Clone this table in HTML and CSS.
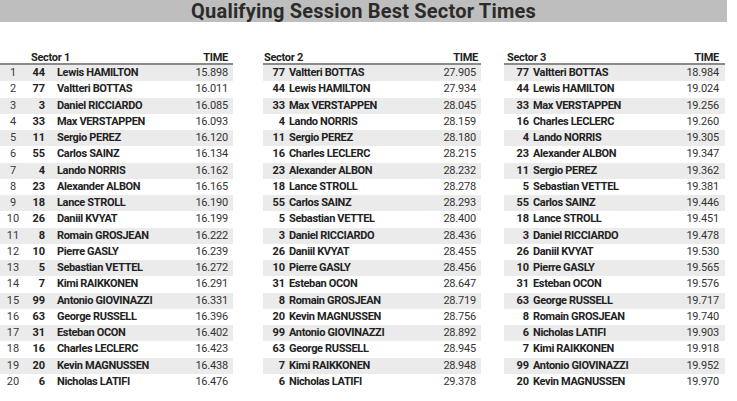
FILE: index.html
```html
<!DOCTYPE html>
<html>
<head>
<meta charset="utf-8">
<link rel="stylesheet" href="styles.css">
</head>
<body>
<div class="title">Qualifying Session Best Sector Times</div>
<div class="tables">
  <div class="tbl t1">
    <div class="head"><span class="hs">Sector 1</span><span class="ht">TIME</span></div>
    <div class="row"><span class="pos">1</span><span class="num">44</span><span class="name">Lewis HAMILTON</span><span class="time">15.898</span></div>
    <div class="row"><span class="pos">2</span><span class="num">77</span><span class="name">Valtteri BOTTAS</span><span class="time">16.011</span></div>
    <div class="row"><span class="pos">3</span><span class="num">3</span><span class="name">Daniel RICCIARDO</span><span class="time">16.085</span></div>
    <div class="row"><span class="pos">4</span><span class="num">33</span><span class="name">Max VERSTAPPEN</span><span class="time">16.093</span></div>
    <div class="row"><span class="pos">5</span><span class="num">11</span><span class="name">Sergio PEREZ</span><span class="time">16.120</span></div>
    <div class="row"><span class="pos">6</span><span class="num">55</span><span class="name">Carlos SAINZ</span><span class="time">16.134</span></div>
    <div class="row"><span class="pos">7</span><span class="num">4</span><span class="name">Lando NORRIS</span><span class="time">16.162</span></div>
    <div class="row"><span class="pos">8</span><span class="num">23</span><span class="name">Alexander ALBON</span><span class="time">16.165</span></div>
    <div class="row"><span class="pos">9</span><span class="num">18</span><span class="name">Lance STROLL</span><span class="time">16.190</span></div>
    <div class="row"><span class="pos">10</span><span class="num">26</span><span class="name">Daniil KVYAT</span><span class="time">16.199</span></div>
    <div class="row"><span class="pos">11</span><span class="num">8</span><span class="name">Romain GROSJEAN</span><span class="time">16.222</span></div>
    <div class="row"><span class="pos">12</span><span class="num">10</span><span class="name">Pierre GASLY</span><span class="time">16.239</span></div>
    <div class="row"><span class="pos">13</span><span class="num">5</span><span class="name">Sebastian VETTEL</span><span class="time">16.272</span></div>
    <div class="row"><span class="pos">14</span><span class="num">7</span><span class="name">Kimi RAIKKONEN</span><span class="time">16.291</span></div>
    <div class="row"><span class="pos">15</span><span class="num">99</span><span class="name">Antonio GIOVINAZZI</span><span class="time">16.331</span></div>
    <div class="row"><span class="pos">16</span><span class="num">63</span><span class="name">George RUSSELL</span><span class="time">16.396</span></div>
    <div class="row"><span class="pos">17</span><span class="num">31</span><span class="name">Esteban OCON</span><span class="time">16.402</span></div>
    <div class="row"><span class="pos">18</span><span class="num">16</span><span class="name">Charles LECLERC</span><span class="time">16.423</span></div>
    <div class="row"><span class="pos">19</span><span class="num">20</span><span class="name">Kevin MAGNUSSEN</span><span class="time">16.438</span></div>
    <div class="row"><span class="pos">20</span><span class="num">6</span><span class="name">Nicholas LATIFI</span><span class="time">16.476</span></div>
  </div>
  <div class="tbl t2">
    <div class="head"><span class="hs">Sector 2</span><span class="ht">TIME</span></div>
    <div class="row"><span class="num">77</span><span class="name">Valtteri BOTTAS</span><span class="time">27.905</span></div>
    <div class="row"><span class="num">44</span><span class="name">Lewis HAMILTON</span><span class="time">27.934</span></div>
    <div class="row"><span class="num">33</span><span class="name">Max VERSTAPPEN</span><span class="time">28.045</span></div>
    <div class="row"><span class="num">4</span><span class="name">Lando NORRIS</span><span class="time">28.159</span></div>
    <div class="row"><span class="num">11</span><span class="name">Sergio PEREZ</span><span class="time">28.180</span></div>
    <div class="row"><span class="num">16</span><span class="name">Charles LECLERC</span><span class="time">28.215</span></div>
    <div class="row"><span class="num">23</span><span class="name">Alexander ALBON</span><span class="time">28.232</span></div>
    <div class="row"><span class="num">18</span><span class="name">Lance STROLL</span><span class="time">28.278</span></div>
    <div class="row"><span class="num">55</span><span class="name">Carlos SAINZ</span><span class="time">28.293</span></div>
    <div class="row"><span class="num">5</span><span class="name">Sebastian VETTEL</span><span class="time">28.400</span></div>
    <div class="row"><span class="num">3</span><span class="name">Daniel RICCIARDO</span><span class="time">28.436</span></div>
    <div class="row"><span class="num">26</span><span class="name">Daniil KVYAT</span><span class="time">28.455</span></div>
    <div class="row"><span class="num">10</span><span class="name">Pierre GASLY</span><span class="time">28.456</span></div>
    <div class="row"><span class="num">31</span><span class="name">Esteban OCON</span><span class="time">28.647</span></div>
    <div class="row"><span class="num">8</span><span class="name">Romain GROSJEAN</span><span class="time">28.719</span></div>
    <div class="row"><span class="num">20</span><span class="name">Kevin MAGNUSSEN</span><span class="time">28.756</span></div>
    <div class="row"><span class="num">99</span><span class="name">Antonio GIOVINAZZI</span><span class="time">28.892</span></div>
    <div class="row"><span class="num">63</span><span class="name">George RUSSELL</span><span class="time">28.945</span></div>
    <div class="row"><span class="num">7</span><span class="name">Kimi RAIKKONEN</span><span class="time">28.948</span></div>
    <div class="row"><span class="num">6</span><span class="name">Nicholas LATIFI</span><span class="time">29.378</span></div>
  </div>
  <div class="tbl t3">
    <div class="head"><span class="hs">Sector 3</span><span class="ht">TIME</span></div>
    <div class="row"><span class="num">77</span><span class="name">Valtteri BOTTAS</span><span class="time">18.984</span></div>
    <div class="row"><span class="num">44</span><span class="name">Lewis HAMILTON</span><span class="time">19.024</span></div>
    <div class="row"><span class="num">33</span><span class="name">Max VERSTAPPEN</span><span class="time">19.256</span></div>
    <div class="row"><span class="num">16</span><span class="name">Charles LECLERC</span><span class="time">19.260</span></div>
    <div class="row"><span class="num">4</span><span class="name">Lando NORRIS</span><span class="time">19.305</span></div>
    <div class="row"><span class="num">23</span><span class="name">Alexander ALBON</span><span class="time">19.347</span></div>
    <div class="row"><span class="num">11</span><span class="name">Sergio PEREZ</span><span class="time">19.362</span></div>
    <div class="row"><span class="num">5</span><span class="name">Sebastian VETTEL</span><span class="time">19.381</span></div>
    <div class="row"><span class="num">55</span><span class="name">Carlos SAINZ</span><span class="time">19.446</span></div>
    <div class="row"><span class="num">18</span><span class="name">Lance STROLL</span><span class="time">19.451</span></div>
    <div class="row"><span class="num">3</span><span class="name">Daniel RICCIARDO</span><span class="time">19.478</span></div>
    <div class="row"><span class="num">26</span><span class="name">Daniil KVYAT</span><span class="time">19.530</span></div>
    <div class="row"><span class="num">10</span><span class="name">Pierre GASLY</span><span class="time">19.565</span></div>
    <div class="row"><span class="num">31</span><span class="name">Esteban OCON</span><span class="time">19.576</span></div>
    <div class="row"><span class="num">63</span><span class="name">George RUSSELL</span><span class="time">19.717</span></div>
    <div class="row"><span class="num">8</span><span class="name">Romain GROSJEAN</span><span class="time">19.740</span></div>
    <div class="row"><span class="num">6</span><span class="name">Nicholas LATIFI</span><span class="time">19.903</span></div>
    <div class="row"><span class="num">7</span><span class="name">Kimi RAIKKONEN</span><span class="time">19.918</span></div>
    <div class="row"><span class="num">99</span><span class="name">Antonio GIOVINAZZI</span><span class="time">19.952</span></div>
    <div class="row"><span class="num">20</span><span class="name">Kevin MAGNUSSEN</span><span class="time">19.970</span></div>
  </div>
</div>
</body>
</html>
```
FILE: styles.css
```css
html, body {
  margin: 0;
  padding: 0;
  background: #ffffff;
}
body {
  font-family: Roboto, "Noto Sans", sans-serif;
  color: #222;
  width: 737px;
  height: 401px;
  overflow: hidden;
}
.title {
  width: 727px;
  height: 22px;
  background: #bebebe;
  color: #2b2b2b;
  font-weight: 700;
  font-size: 20px;
  line-height: 23px;
  text-align: center;
  letter-spacing: 0.2px;
}
.tables {
  display: flex;
  margin-top: 26px;
}
.tbl {
  display: flex;
  flex-direction: column;
}
.t1 { width: 233px; }
.t2 { width: 218px; margin-left: 30px; }
.t3 { width: 221px; margin-left: 23px; }
.head {
  display: flex;
  justify-content: space-between;
  align-items: flex-end;
  height: 15px;
  border-bottom: 2px solid #8a8a8a;
  font-weight: 700;
  font-size: 11px;
  line-height: 11px;
  color: #222;
  letter-spacing: -0.3px;
}
.t1 .head { padding-left: 31px; padding-right: 5px; }
.t2 .head { padding-left: 1px; padding-right: 3px; }
.t3 .head { padding-left: 3px; padding-right: 6px; }
.row {
  display: flex;
  align-items: center;
  height: 16.25px;
  font-size: 11px;
  line-height: 16px;
}
.row:nth-child(even) { background: #ebebeb; }
.pos {
  width: 26px;
  text-align: center;
  color: #3a3a3a;
}
.num {
  text-align: right;
  font-weight: 700;
  color: #222;
}
.t1 .num { width: 19px; }
.t2 .num { width: 22px; }
.t3 .num { width: 25px; }
.name {
  flex: 1;
  font-weight: 700;
  color: #222;
  letter-spacing: -0.35px;
  padding-left: 4px;
}
.t1 .name { padding-left: 12px; }
.time {
  text-align: right;
  color: #333;
  letter-spacing: -0.2px;
}
.t1 .time { padding-right: 5px; }
.t2 .time { padding-right: 5px; }
.t3 .time { padding-right: 6px; }
```
